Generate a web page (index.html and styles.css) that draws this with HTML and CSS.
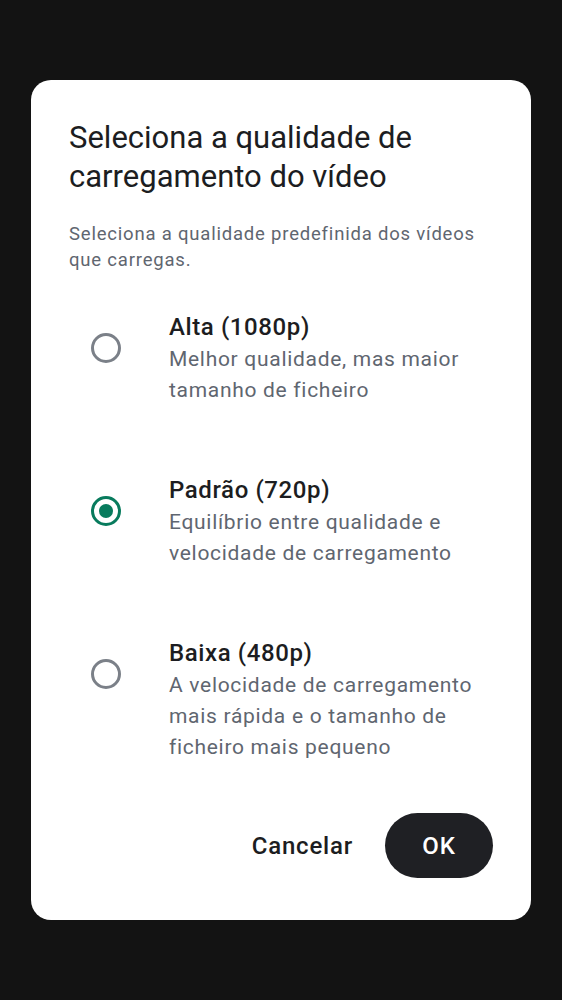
FILE: index.html
```html
<!DOCTYPE html>
<html lang="pt">
<head>
<meta charset="utf-8">
<link rel="stylesheet" href="styles.css">
</head>
<body>
<div class="dialog">
  <h1 class="title">Seleciona a qualidade de carregamento do vídeo</h1>
  <p class="subtitle">Seleciona a qualidade predefinida dos vídeos que carregas.</p>
  <div class="options">
    <div class="option">
      <div class="radio-box"><span class="radio"></span></div>
      <div class="text">
        <div class="opt-title">Alta (1080p)</div>
        <div class="opt-desc">Melhor qualidade, mas maior tamanho de ficheiro</div>
      </div>
    </div>
    <div class="option">
      <div class="radio-box"><span class="radio checked"></span></div>
      <div class="text">
        <div class="opt-title">Padrão (720p)</div>
        <div class="opt-desc">Equilíbrio entre qualidade e velocidade de carregamento</div>
      </div>
    </div>
    <div class="option">
      <div class="radio-box"><span class="radio"></span></div>
      <div class="text">
        <div class="opt-title">Baixa (480p)</div>
        <div class="opt-desc">A velocidade de carregamento mais rápida e o tamanho de ficheiro mais pequeno</div>
      </div>
    </div>
  </div>
  <div class="actions">
    <button class="btn text-btn">Cancelar</button>
    <button class="btn filled">OK</button>
  </div>
</div>
</body>
</html>
```
FILE: styles.css
```css
html, body {
  margin: 0;
  padding: 0;
  background: #131313;
  font-family: Roboto, "Noto Sans", sans-serif;
}
body {
  padding-top: 80px;
  height: 1000px;
  box-sizing: border-box;
}
.dialog {
  margin-left: 31px;
  width: 500px;
  height: 840px;
  box-sizing: border-box;
  background: #ffffff;
  border-radius: 20px;
  padding: 38px 38px 42px 38px;
  display: flex;
  flex-direction: column;
}
.title {
  margin: 0;
  font-size: 31px;
  line-height: 39px;
  font-weight: 400;
  color: #1c1d21;
}
.subtitle {
  margin: 25px 0 0 0;
  font-size: 18.5px;
  line-height: 26px;
  letter-spacing: 0.8px;
  color: #5f6670;
}
.options {
  margin-top: 37px;
  display: flex;
  flex-direction: column;
  gap: 67px;
}
.option {
  display: flex;
  align-items: flex-start;
}
.radio-box {
  width: 74px;
  flex: none;
  display: flex;
  justify-content: center;
  padding-top: 23px;
  margin-right: 26px;
}
.radio {
  width: 24px;
  height: 24px;
  border: 3px solid #7b8088;
  border-radius: 50%;
  display: flex;
  align-items: center;
  justify-content: center;
}
.radio.checked {
  border-color: #087b5d;
}
.radio.checked::after {
  content: "";
  width: 14px;
  height: 14px;
  border-radius: 50%;
  background: #087b5d;
}
.text {
  flex: 1;
  padding-right: 10px;
}
.opt-title {
  font-size: 24px;
  line-height: 34px;
  font-weight: 500;
  letter-spacing: 0.6px;
  color: #1c1d21;
}
.opt-desc {
  font-size: 21px;
  line-height: 31px;
  letter-spacing: 0.7px;
  color: #5f6670;
}
.actions {
  margin-top: auto;
  display: flex;
  justify-content: flex-end;
  align-items: center;
  gap: 12px;
}
.btn {
  font-family: Roboto, "Noto Sans", sans-serif;
  font-size: 24px;
  font-weight: 500;
  letter-spacing: 0.8px;
  border: none;
  height: 65px;
  border-radius: 33px;
  cursor: pointer;
}
.text-btn {
  background: transparent;
  color: #1c1d21;
  padding: 0 20px;
}
.filled {
  background: #1f2024;
  color: #ffffff;
  width: 108px;
}
```
